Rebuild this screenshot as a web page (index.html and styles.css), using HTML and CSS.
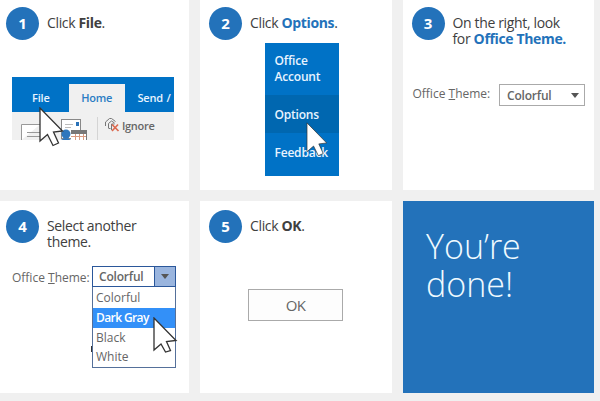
FILE: index.html
```html
<!DOCTYPE html>
<html lang="en">
<head>
<meta charset="UTF-8" />
<meta name="viewport" content="width=device-width, initial-scale=1" />
<title>Change the Office theme</title>
<link rel="stylesheet" href="styles.css">
</head>
<body>
  <main class="steps">
    <section class="card">
      <div class="step-head">
        <span class="num">1</span>
        <p>Click <b>File</b>.</p>
      </div>
      <div class="ribbon">
        <div class="tabs">
          <span class="tab tab-file">File</span>
          <span class="tab tab-home">Home</span>
          <span class="tab tab-send">Send / R</span>
        </div>
        <div class="tools">
          <svg class="tool-icons" width="92" height="28" viewBox="0 0 92 28">
            <path d="M9.500 28V12.500H28M15 20.500h13M15 24.500h13" fill="#fff" stroke="#999" />
            <rect x="49.500" y="7.500" width="19" height="19" fill="#fff" stroke="#888" />
            <path d="M53 12.500h8M53 15.500h6" stroke="#bbb" />
            <rect x="64" y="10" width="3" height="4" fill="#2a72b8" />
            <rect x="59" y="18" width="16" height="10" fill="#fff" />
            <rect x="59" y="18" width="16" height="4" fill="#777" />
            <path d="M59 24.500h16M63.500 22v6M67.500 22v6M71.500 22v6" stroke="#d89a80" />
            <path d="M74.500 19v9" stroke="#777" />
            <circle cx="54" cy="22" r="4.500" fill="#2f77bd" />
            <path d="M49 28q5-4 10 0z" fill="#2f77bd" />
            <path d="M85.500 5v23" stroke="#d4d4d4" />
          </svg>
          <svg class="ignore-icon" width="16" height="16" viewBox="0 0 16 16" fill="none">
            <path d="M1.500 9V5l4-3.500h2l4 3M4.500 11V6.500l3-2.500 3 2M4.500 11.500h2M7.500 13V7h3" stroke="#777" />
            <path d="M8 7.500l6.500 6.500M14 7.500l-6 6.500" stroke="#dc6a50" stroke-width="1.700" />
          </svg>
          <span class="ignore">Ignore</span>
        </div>
        <svg class="cursor cursor-file" width="26" height="40" viewBox="0 0 26 40">
          <path d="M1 1v33l7.500-6.500 5.500 11 5.500-2.500-5-11 9-1z" />
        </svg>
      </div>
    </section>

    <section class="card card-mid">
      <div class="step-head">
        <span class="num">2</span>
        <p>Click <b class="blue">Options</b>.</p>
      </div>
      <div class="menu">
        <span class="menu-item menu-account">Office<br>Account</span>
        <span class="menu-item menu-options">Options</span>
        <span class="menu-item menu-feedback">Feedback</span>
        <svg class="cursor cursor-options" width="23" height="35" viewBox="0 0 26 40">
          <path d="M1 1v33l7.500-6.500 5.500 11 5.500-2.500-5-11 9-1z" />
        </svg>
      </div>
    </section>

    <section class="card card-right">
      <div class="step-head">
        <span class="num">3</span>
        <p>On the right, look<br>for <b class="blue">Office Theme.</b></p>
      </div>
      <div class="field field-closed">
        <span class="label">Office <u>T</u>heme:</span>
        <div class="select">
          <span>Colorful</span>
          <i class="arrow"></i>
        </div>
      </div>
    </section>

    <section class="card">
      <div class="step-head">
        <span class="num">4</span>
        <p>Select another<br>theme.</p>
      </div>
      <div class="field field-open">
        <span class="label">Office <u>T</u>heme:</span>
        <div class="dropdown">
          <div class="select select-open">
            <span>Colorful</span>
            <div class="drop-btn"><i class="arrow"></i></div>
          </div>
          <ul class="options">
            <li>Colorful</li>
            <li class="selected">Dark Gray</li>
            <li>Black</li>
            <li>White</li>
          </ul>
          <svg class="cursor cursor-list" width="25" height="36" viewBox="0 0 25 36">
            <path d="M1 1v32l7-6 4.500 8 5-1.500-4-9 9.500-1z" />
          </svg>
        </div>
      </div>
    </section>

    <section class="card card-mid">
      <div class="step-head">
        <span class="num">5</span>
        <p>Click <b>OK</b>.</p>
      </div>
      <button class="ok">OK</button>
    </section>

    <section class="card done">
      <h1>You’re<br>done!</h1>
    </section>
  </main>
</body>
</html>
```
FILE: styles.css
```css
* {
  box-sizing: border-box;
}
body {
  margin: 0;
  background: #f0f0f0;
  color: #404040;
  font-family: "Open Sans", "Noto Sans", sans-serif;
  overflow: hidden;
}
p, h1, ul {
  margin: 0;
  padding: 0;
}
.steps {
  display: grid;
  grid-template-columns: 188.5px 191.5px 191px;
  grid-template-rows: 189.5px 191.5px;
  gap: 11.5px;
}
.card {
  background: #fff;
  padding: 7px 0 0 6px;
}
.card-mid {
  padding-left: 9px;
}
.card-right {
  padding-left: 8.5px;
}
.card:nth-child(n+4) {
  padding-top: 9px;
}

/* Step number and instruction */
.step-head {
  display: flex;
  gap: 8px;
  height: 33px;
}
.num {
  flex: none;
  width: 33px;
  height: 33px;
  border-radius: 50%;
  background: #2372ba;
  color: #fff;
  font-size: 15px;
  font-weight: 700;
  line-height: 32px;
  text-align: center;
}
.step-head p {
  margin-top: 8px;
  font-size: 14px;
  line-height: 16px;
  letter-spacing: -0.35px;
  white-space: nowrap;
}
.blue {
  color: #2372ba;
}

/* Outlook ribbon */
.ribbon {
  position: relative;
  width: 162px;
  height: 62.5px;
  margin: 37px 0 0 6px;
  background: #f0f0f0;
}
.tabs {
  display: flex;
  align-items: flex-end;
  height: 35px;
  background: #0072c6;
  overflow: hidden;
}
.tab {
  flex: none;
  height: 28px;
  color: #e8f4ff;
  font-size: 11px;
  font-weight: 600;
  line-height: 28px;
  letter-spacing: -0.2px;
  white-space: nowrap;
}
.tab-file {
  width: 57px;
  padding-left: 20px;
}
.tab-home {
  width: 55.5px;
  background: #f0f0f0;
  color: #2a7cc4;
  text-align: center;
}
.tab-send {
  padding-left: 13px;
  word-spacing: 1px;
}
.tools {
  display: flex;
  height: 27.5px;
  overflow: hidden;
}
.ignore-icon {
  margin-top: 5px;
}
.ignore {
  margin-left: 2px;
  color: #666;
  font-size: 11px;
  font-weight: 600;
  line-height: 27px;
  letter-spacing: -0.3px;
}

/* Mouse pointers */
.cursor {
  position: absolute;
  fill: #fff;
  stroke: #333;
  stroke-width: 1.3;
}
.cursor-file {
  left: 27px;
  top: 30px;
}
.cursor-options {
  left: 41px;
  top: 79px;
  stroke-width: 0.8;
}
.cursor-list {
  left: 61px;
  top: 51px;
}

/* File menu */
.menu {
  position: relative;
  width: 74px;
  height: 132.5px;
  margin: 3px 0 0 56px;
  background: #0072c6;
  color: #e8f4ff;
  font-size: 12px;
  font-weight: 600;
  letter-spacing: -0.2px;
}
.menu-item {
  display: block;
  height: 38px;
  padding-left: 9.5px;
  line-height: 40px;
}
.menu-account {
  height: 52px;
  padding-top: 10px;
  line-height: 16px;
}
.menu-options {
  background: #0067b0;
}

/* Theme picker */
.field {
  display: flex;
  color: #666;
  font-size: 12px;
}
.label {
  white-space: nowrap;
}
.field-closed {
  margin: 44px 0 0 1px;
}
.field-closed .label {
  width: 86.5px;
  line-height: 19px;
}
.select {
  display: flex;
  align-items: center;
  justify-content: space-between;
  width: 86px;
  height: 22px;
  padding: 0 5px 0 7px;
  border: 1px solid #aaa;
  font-weight: 600;
  letter-spacing: -0.2px;
}
.arrow {
  border: 4px solid transparent;
  border-top: 5px solid #555;
  border-bottom: 0;
}
.field-open {
  margin: 23px 0 0 6px;
}
.field-open .label {
  width: 80px;
  line-height: 24px;
}
.dropdown {
  position: relative;
  width: 84px;
}
.select-open {
  width: 84px;
  height: 21px;
  padding: 0 0 0 6px;
  border-color: #2b579a;
}
.drop-btn {
  display: flex;
  align-items: center;
  justify-content: center;
  width: 21px;
  height: 19px;
  border-left: 1px solid #2b579a;
  background: #9ab5de;
}
.options {
  list-style: none;
  height: 81px;
  border: 1px solid #55709a;
  border-top: 0;
  background: #fff;
}
.options li {
  height: 19.5px;
  padding-left: 3px;
  line-height: 19px;
}
.options li:first-child {
  height: 21px;
  line-height: 22px;
}
.options .selected {
  background: #3390f8;
  color: #fff;
  font-weight: 600;
  letter-spacing: -0.6px;
}
/* sliver of shadow beside the list */
.dropdown::before {
  content: "";
  position: absolute;
  left: -1px;
  top: 80px;
  width: 1px;
  height: 6px;
  background: #333;
}

.ok {
  display: block;
  width: 95px;
  height: 32px;
  margin: 46px 0 0 39px;
  padding: 0;
  border: 1px solid #aaa;
  background: #fdfdfd;
  color: #666;
  font-family: inherit;
  font-size: 15px;
  letter-spacing: -0.8px;
}

.card.done {
  padding: 26px 0 0 23px;
  background: #2372ba;
  color: #f0faff;
}
.done h1 {
  font-size: 34px;
  font-weight: 300;
  line-height: 38px;
}
```
